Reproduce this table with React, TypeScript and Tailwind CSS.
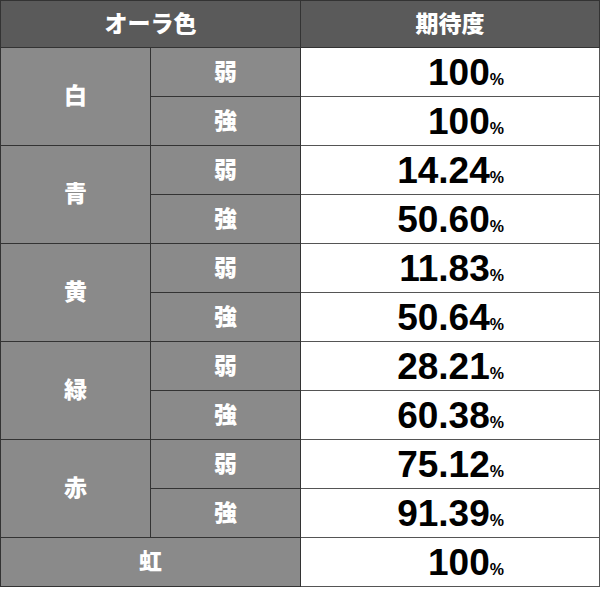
const rows = [
  { color: '白', values: ['100', '100'] },
  { color: '青', values: ['14.24', '50.60'] },
  { color: '黄', values: ['11.83', '50.64'] },
  { color: '緑', values: ['28.21', '60.38'] },
  { color: '赤', values: ['75.12', '91.39'] },
];

const levels = ['弱', '強'];

function Rate({ value }: { value: string }) {
  return (
    <td className="h-[49px] border border-[#555] bg-white pr-[95px] text-right align-middle text-black">
      <span className="inline-block translate-y-[1px] text-[37px] font-bold leading-none">{value}</span>
      <span className="inline-block translate-y-[1px] text-[16px] font-bold leading-none">%</span>
    </td>
  );
}

export default function App() {
  return (
    <div className="h-[597px] w-[600px] bg-white font-['Liberation_Sans','Noto_Sans_CJK_JP',sans-serif]">
      <table className="w-[599px] table-fixed border-collapse">
        <colgroup>
          <col className="w-[150px]" />
          <col className="w-[150px]" />
          <col className="w-[299px]" />
        </colgroup>
        <thead>
          <tr className="h-[47px]">
            <th colSpan={2} className="border border-[#333] bg-[#5a5a5a] text-[23px] font-black text-white">
              オーラ色
            </th>
            <th className="border border-[#333] bg-[#5a5a5a] text-[23px] font-black text-white">期待度</th>
          </tr>
        </thead>
        <tbody>
          {rows.map((row) =>
            row.values.map((value, i) => (
              <tr key={row.color + i} className="h-[49px]">
                {i === 0 && (
                  <td rowSpan={2} className="border border-[#333] bg-[#8a8a8a] text-center text-[23px] font-black text-white">
                    {row.color}
                  </td>
                )}
                <td className="border border-[#333] bg-[#8a8a8a] text-center text-[23px] font-black text-white">
                  {levels[i]}
                </td>
                <Rate value={value} />
              </tr>
            ))
          )}
          <tr className="h-[49px]">
            <td colSpan={2} className="border border-[#333] bg-[#8a8a8a] text-center text-[23px] font-black text-white">
              虹
            </td>
            <Rate value="100" />
          </tr>
        </tbody>
      </table>
    </div>
  );
}
